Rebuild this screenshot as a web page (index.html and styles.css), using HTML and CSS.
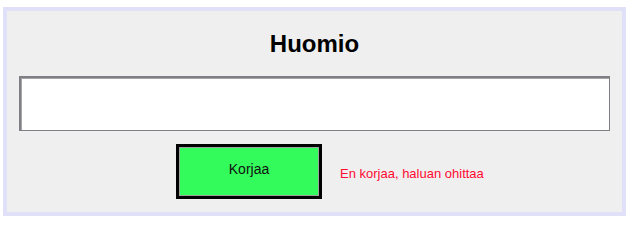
FILE: index.html
```html
<!DOCTYPE html>
<html lang="fi">
<head>
<meta charset="utf-8">
<title>Huomio</title>
<link rel="stylesheet" href="styles.css">
</head>
<body>
<div class="panel">
  <h1 class="title">Huomio</h1>
  <input class="field" type="text">
  <div class="actions">
    <button class="fix-btn" type="button">Korjaa</button>
    <a class="skip-link" href="#">En korjaa, haluan ohittaa</a>
  </div>
</div>
</body>
</html>
```
FILE: styles.css
```css
html, body {
  margin: 0;
  padding: 0;
  background: #ffffff;
}

body {
  font-family: "Liberation Sans", Arial, sans-serif;
}

.panel {
  box-sizing: border-box;
  width: 623px;
  height: 209px;
  margin: 7px 0 0 3px;
  border: 4px solid #e0e0f8;
  background: #efefef;
  padding: 19px 12px 13px 12px;
  display: flex;
  flex-direction: column;
}

.title {
  margin: 0;
  font-size: 24px;
  line-height: 28px;
  font-weight: bold;
  color: #000000;
  text-align: center;
}

.field {
  box-sizing: border-box;
  display: block;
  width: 591px;
  height: 55px;
  margin: 18px 0 0 0;
  padding: 0 4px;
  background: #ffffff;
  border-style: solid;
  border-color: #7f7f86;
  border-width: 2px 1px 1px 2px;
  box-shadow: inset 1px 1px 0 #a5a5a5;
  outline: none;
  font-family: "Liberation Sans", Arial, sans-serif;
  font-size: 14px;
}

.actions {
  display: flex;
  align-items: center;
  gap: 18px;
  margin-top: 13px;
  padding-left: 157px;
}

.fix-btn {
  box-sizing: border-box;
  width: 146px;
  height: 55px;
  padding: 0 0 6px 0;
  border: 3px solid #000000;
  background: #33fb5b;
  box-shadow: inset 0 0 0 1px #9aa39a;
  font-family: "Liberation Sans", Arial, sans-serif;
  font-size: 14px;
  color: #111111;
  cursor: pointer;
}

.skip-link {
  margin-top: 3px;
  font-size: 13px;
  line-height: 15px;
  color: #ff0a32;
  text-decoration: none;
}
```
